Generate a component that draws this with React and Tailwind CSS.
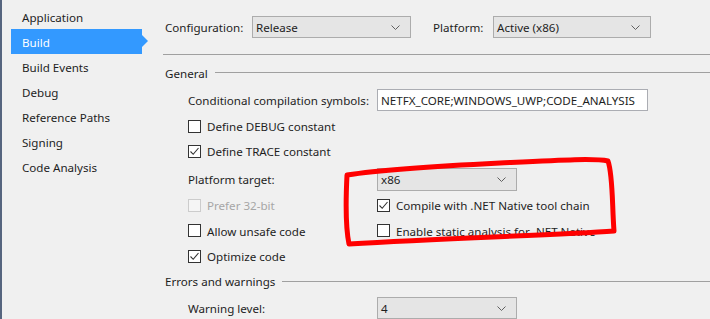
import React from "react";

const font = { fontFamily: '"Segoe UI", "Noto Sans", "Open Sans", sans-serif' };

function T({ children, className = "" }) {
  return <span className={`relative top-[1px] ${className}`}>{children}</span>;
}

function Chevron() {
  return (
    <svg width="9" height="5" viewBox="0 0 9 5" className="shrink-0">
      <path d="M0.5 0.5 L4.5 4.5 L8.5 0.5" fill="none" stroke="#606060" strokeWidth="1" />
    </svg>
  );
}

function Select({ value, w, h = "h-[22px]" }) {
  return (
    <div className={`${w} ${h} border border-[#acacac] bg-[#e5e5e5] flex items-center justify-between pl-[3px] pr-[10px] text-[#1e1e1e]`}>
      <T>{value}</T>
      <Chevron />
    </div>
  );
}

function Check({ checked, disabled, label }) {
  return (
    <div className="flex items-center gap-[6px]">
      <div
        className={`w-[13px] h-[13px] border flex items-center justify-center ${
          disabled ? "border-[#cccccc] bg-[#f5f5f5]" : "border-[#333333] bg-white"
        }`}
      >
        {checked && (
          <svg width="11" height="11" viewBox="0 0 11 11">
            <path d="M1.5 5.5 L4.2 8.3 L9.5 2" fill="none" stroke="#333333" strokeWidth="1.1" />
          </svg>
        )}
      </div>
      <T className={disabled ? "text-[#a6a6a6]" : "text-[#1e1e1e]"}>{label}</T>
    </div>
  );
}

function SectionHeader({ title, className }) {
  return (
    <div className={`flex items-center h-[18px] pl-[2px] ${className}`}>
      <T className="text-[#1e1e1e] pr-[7px]">{title}</T>
      <div className="flex-1 h-px bg-[#a0a0a0]" />
    </div>
  );
}

export default function App() {
  const items = ["Application", "Build", "Build Events", "Debug", "Reference Paths", "Signing", "Code Analysis"];
  return (
    <div
      className="relative w-[710px] h-[319px] overflow-hidden bg-[#f0f0f0] flex text-[11.6px] leading-none"
      style={font}
    >
      {/* Sidebar */}
      <div className="w-[163px] shrink-0 h-full border-l-2 border-[#56657f] pt-[4px]">
        {items.map((it) => {
          const sel = it === "Build";
          return (
            <div key={it} className="relative h-[25px] ml-[9px] w-[131px]">
              <div
                className={`h-full flex items-center pl-[11px] ${
                  sel ? "bg-[#3399ff] text-white" : "text-[#1e1e1e]"
                }`}
              >
                <T>{it}</T>
              </div>
              {sel && (
                <div className="absolute right-[-6px] top-[6px] w-0 h-0 border-y-[6px] border-y-transparent border-l-[6px] border-l-[#3399ff]" />
              )}
            </div>
          );
        })}
      </div>

      {/* Content */}
      <div className="flex-1 flex flex-col">
        <div className="h-[55px] border-b border-[#a0a0a0] flex items-center pl-[2px] shrink-0">
          <T className="text-[#1e1e1e] w-[87px]">Configuration:</T>
          <Select value="Release" w="w-[159px]" />
          <T className="text-[#1e1e1e] ml-[22px] w-[60px]">Platform:</T>
          <Select value="Active (x86)" w="w-[158px]" />
        </div>

        <SectionHeader title="General" className="mt-[9px]" />

        <div className="pl-[25px] flex flex-col">
          <div className="mt-[7px] h-[22px] flex items-center">
            <T className="w-[189px] text-[#1e1e1e]">Conditional compilation symbols:</T>
            <div className="w-[271px] h-[22px] border border-[#abadb3] bg-white flex items-center pl-[3px] text-[#1e1e1e]">
              <T>NETFX_CORE;WINDOWS_UWP;CODE_ANALYSIS</T>
            </div>
          </div>
          <div className="h-[25px] mt-[3px] flex items-center">
            <Check label="Define DEBUG constant" />
          </div>
          <div className="h-[25px] flex items-center">
            <Check checked label="Define TRACE constant" />
          </div>
          <div className="h-[23px] mt-[4px] flex items-center">
            <T className="w-[189px] text-[#1e1e1e]">Platform target:</T>
            <Select value="x86" w="w-[140px]" h="h-[23px]" />
          </div>
          <div className="h-[25px] mt-[2px] flex items-center">
            <div className="w-[189px]">
              <Check disabled label="Prefer 32-bit" />
            </div>
            <Check checked label="Compile with .NET Native tool chain" />
          </div>
          <div className="h-[26px] flex items-center">
            <div className="w-[189px]">
              <Check label="Allow unsafe code" />
            </div>
            <Check label="Enable static analysis for .NET Native" />
          </div>
          <div className="h-[25px] flex items-center">
            <Check checked label="Optimize code" />
          </div>
        </div>

        <SectionHeader title="Errors and warnings" className="mt-[4px]" />

        <div className="pl-[25px] mt-[7px] h-[22px] flex items-center shrink-0">
          <T className="w-[189px] text-[#1e1e1e]">Warning level:</T>
          <Select value="4" w="w-[140px]" />
        </div>
      </div>

      {/* Red annotation */}
      <svg className="absolute inset-0 pointer-events-none" width="710" height="319" viewBox="0 0 710 319">
        <path
          d="M347 175 C 380 170 440 166 500 163 C 560 160 595 158 608 161 C 613 175 612 205 614 231 C 560 235 450 238 349 244 C 345 225 346 195 347 175 Z"
          fill="none"
          stroke="#ff0000"
          strokeWidth="5"
          strokeLinejoin="round"
        />
      </svg>
    </div>
  );
}
